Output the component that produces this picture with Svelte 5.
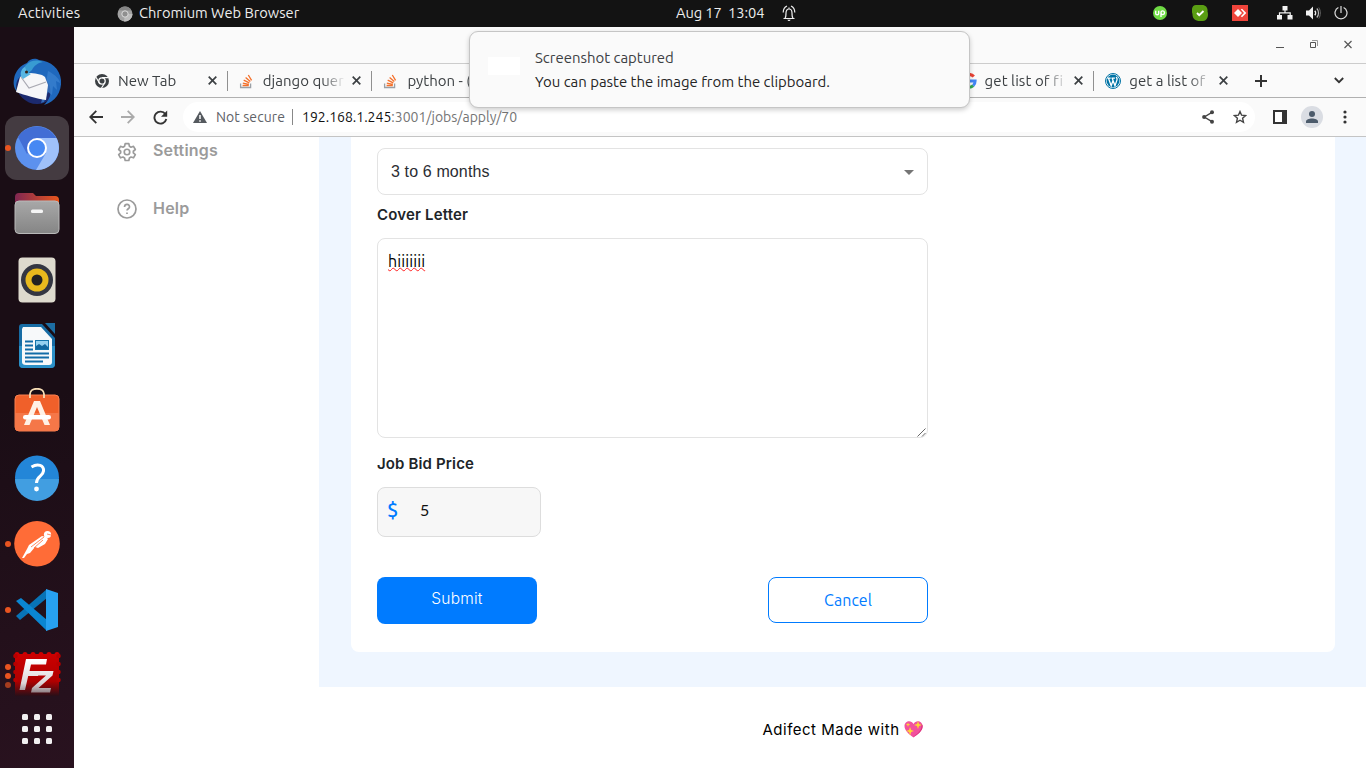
<script>
  const lead = [
    { title: 'New Tab', icon: 'chrome', ls: 0 },
    { title: 'django quer', icon: 'stack', ls: 0.03 },
    { title: 'python - (', icon: 'stack', ls: 0 }
  ];
  const tail = [
    { title: 'get list of fi', icon: 'google', ls: 0.08 },
    { title: 'get a list of', icon: 'wp', ls: 0.05 }
  ];
  const scallops = [0, 1, 2, 3, 4, 5];
  const nine = [0, 1, 2, 3, 4, 5, 6, 7, 8];
</script>

{#snippet favicon(name)}
  {#if name === 'chrome'}
    <svg width="16" height="16" viewBox="0 0 16 16"><circle cx="8" cy="8" r="7" fill="#3c4043" /><circle cx="8" cy="8" r="3.2" fill="#3c4043" stroke="#fafafa" stroke-width="1.3" /><path d="M8 4.7h6.5M5.2 9.8L2 4.3M10.8 9.7L7.5 15" stroke="#fafafa" stroke-width="1.2" /></svg>
  {:else if name === 'stack'}
    <svg width="16" height="16" viewBox="0 0 16 16" fill="none"><path d="M1.6 10.5v4h10v-4" stroke="#9aa0a6" stroke-width="1.3" /><path d="M3.6 12.500h6.200M3.800 10.100l6.100 1.200M4.700 7.200l5.600 2.700M6.600 4.400l4.700 4M9.300 2l3.300 5.300" stroke="#f4702a" stroke-width="1.3" /></svg>
  {:else if name === 'google'}
    <svg width="16" height="16" viewBox="0 0 16 16" fill="none" stroke-width="3"><path d="M12.8 3.6A6.2 6.2 0 0 0 2.5 5" stroke="#ea4335" /><path d="M2.5 5a6.2 6.2 0 0 0 0 6" stroke="#fbbc05" /><path d="M2.5 11a6.2 6.2 0 0 0 9.7 1.6" stroke="#34a853" /><path d="M8 8h6.1c0 2-.7 3.600-1.900 4.600" stroke="#4285f4" /></svg>
  {:else}
    <svg width="16" height="16" viewBox="0 0 16 16"><circle cx="8" cy="8" r="7.500" fill="#fff" stroke="#0073a5" /><circle cx="8" cy="8" r="6.400" fill="#0073a5" /><path d="M2.300 5.200h3.400M6.500 5.200h3.400M3.500 5.200l2.700 7.600L8.100 7.200M7.200 5.200l2.800 7.600 2-5.900c.5-1.500-.5-1.900-.7-3.100" fill="none" stroke="#fff" stroke-width="1.300" /></svg>
  {/if}
{/snippet}

{#snippet tab(t)}
  <div class="tab">
    {@render favicon(t.icon)}
    <span class="title" style="letter-spacing:{t.ls}px">{t.title}</span>
    <svg class="x" width="9" height="9" viewBox="0 0 9 9"><path d="M.7.7l7.600 7.600M8.300.7L.7 8.300" stroke="#3c4043" stroke-width="1.700" /></svg>
  </div>
{/snippet}

<div class="desktop">
  <header class="topbar">
    <div class="left">
      <span class="act">Activities</span>
      <svg width="16" height="16" viewBox="0 0 16 16"><circle cx="8" cy="8" r="7.500" fill="#a2a2a2" /><path d="M8 8h7.500A7.500 7.500 0 0 1 7 15.400z" fill="#bcbcbc" /><path d="M1.500 4.200A7.500 7.500 0 0 1 14.500 4.500H8z" fill="#858585" /><circle cx="8" cy="8" r="3.200" fill="#8f8f8f" stroke="#ddd" /></svg>
      <span class="appname">Chromium Web Browser</span>
    </div>
    <div class="clock">
      <span>Aug 17&nbsp; 13:04</span>
      <svg width="14" height="17" viewBox="0 0 14 17" fill="none" stroke="#eee"><path d="M1.500 13.500h11M3 13.200c1-1 1-2 1-5.200 0-2.600 1.100-4 3-4s3 1.400 3 4c0 3.200 0 4.200 1 5.200M7 4V2.500M1.200 7.500C1.300 4.300 2.600 2 5 1M12.800 7.500C12.700 4.300 11.400 2 9 1" stroke-width="1.200" /><path d="M5.200 14.700h3.600L7.600 16H6.400z" fill="#eee" stroke="none" /></svg>
    </div>
    <div class="tray">
      <svg width="14" height="14" viewBox="0 0 14 14"><circle cx="7" cy="7" r="7" fill="#6fda44" /><path d="M2.700 4.700v2.700c0 1.900 3 1.900 3 0V4.700M8 11V6.800c0-2.600 3.500-2.400 3.500 0 0 2.300-3 2.300-3.600.5" fill="none" stroke="#fff" stroke-width="1.400" /></svg>
      <svg class="skype" width="16" height="16" viewBox="0 0 16 16"><path d="M4 0h6c4 0 6 3 5.500 6.500C17 11 15 16 11 16H8C3 16 .3 13 .5 9 -1 5 0 0 4 0z" fill="#5a9e13" /><path d="M5 8l2.200 2.200L11.500 6" fill="none" stroke="#fff" stroke-width="1.900" /></svg>
      <svg class="anyd" width="16" height="16" viewBox="0 0 16 16"><path fill="#ef443b" d="M0 0h16v16H0z" /><path d="M2 8l4-4 4 4-4 4zM8.800 4.600L10 3.700 14.300 8 10 12.300l-1.200-1L12 8z" fill="#fff" /></svg>
      <svg class="net" width="16" height="14" viewBox="0 0 16 14" fill="#f2f2f2"><path d="M5.500 0h5v4.500h-5zM0 9h5v4.500H0zM10.500 9h5v4.500h-5z" /><path d="M8 4v3M2.500 10V6.900h10.700V10" fill="none" stroke="#f2f2f2" stroke-width="1.200" /></svg>
      <svg class="vol" width="15" height="14" viewBox="0 0 15 14"><path d="M0 4.500h3L7 .5v13l-4-4H0z" fill="#f2f2f2" /><path d="M8.800 4.700c1.100 1.200 1.100 3.400 0 4.600" fill="none" stroke="#f2f2f2" stroke-width="1.400" /><path d="M10.800 2.500c2.300 2.300 2.300 6.700 0 9" fill="none" stroke="#bbb" stroke-width="1.200" /><path d="M12.800 1.500c2 3 2 8 0 11" fill="none" stroke="#666" /></svg>
      <svg class="pow" width="14" height="14" viewBox="0 0 14 14" fill="none" stroke="#ddd" stroke-width="1.200"><path d="M7 0v7M4.400 1.500a6 6 0 1 0 5.200 0" /></svg>
    </div>
  </header>

  <div class="body">
    <nav class="dock">
      <div class="slot first">
        <svg width="50" height="50" viewBox="0 0 50 50"><circle cx="25" cy="26" r="21" fill="#1c2a6e" /><path d="M2 22C3 14 9 8 15 6c3-5 9-5 12-3 12 1 21 9 22 20 1 12-6 22-17 25 3-3 5-6 6-9 2-11-3-20-15-22L8 20c-4 3-5 10-2 16-4-4-5-9-4-14z" fill="#1f68bd" /><path d="M14 8c5-6 13-5 17-3-6 1-9 4-11 8l-8 7c-2-4-1-9 2-12z" fill="#389bd2" /><path d="M36 14c8 4 12 9 12 12l-4-2 1 9-4-4-1 9-4-3-4 10-3 1 4-14z" fill="#3b82d0" opacity=".75" /><path d="M4 35L8 20l8-4c6 0 14 1 17 4l3 8-2 15C25 42 13 38 4 35z" fill="#f6f6f8" /><path d="M9 20l8 11 17-6" fill="none" stroke="#a9a9b2" stroke-width="1.200" /><path d="M9 19c-1-4 1-8 4-9l2 5 4 2-8 5z" fill="#58b6e3" /><circle cx="14.500" cy="15" r="1.500" fill="#392418" /></svg>
      </div>
      <div class="slot active"><i class="run"></i>
        <svg width="44" height="44" viewBox="0 0 44 44"><circle cx="22" cy="22" r="22" fill="#5c91ee" /><path d="M3 11A22 22 0 0 1 41 12H22L12 28z" fill="#426ed5" /><path d="M22 12h19.500A22 22 0 0 1 21 44l10-17z" fill="#9fc1fa" /><circle cx="22" cy="22" r="9" fill="#4688f3" stroke="#fff" stroke-width="2" /></svg>
      </div>
      <div class="slot"><svg width="46" height="42" viewBox="0 0 46 42"><defs><linearGradient id="fold"><stop stop-color="#802752" /><stop offset="1" stop-color="#e9561d" /></linearGradient><linearGradient id="grey" x2="0" y2="1"><stop stop-color="#a8a8a8" /><stop offset="1" stop-color="#858585" /></linearGradient></defs><path d="M1 4q0-4 4-4h14l3 3h19q4 0 4 4v10H1z" fill="url(#fold)" /><rect x="1" y="8" width="44" height="32.500" rx="4" fill="url(#grey)" stroke="#b9b9b9" /><rect x="17" y="16.500" width="12" height="3.500" rx="1.500" fill="#f5f5f5" /></svg></div>
      <div class="slot"><svg width="38" height="46" viewBox="0 0 38 46"><rect x=".5" y=".5" width="37" height="45" rx="4" fill="#dedace" /><circle cx="19" cy="23" r="16" fill="#343642" /><circle cx="19" cy="23" r="11.500" fill="#e8b91d" /><circle cx="19" cy="23" r="5.500" fill="#222" /></svg></div>
      <div class="slot"><svg width="38" height="46" viewBox="0 0 38 46"><path d="M4 1h20l13 14v26q0 4-4 4H5q-4 0-4-4V4q0-3 3-3z" fill="#176ca4" /><path d="M1 23h36v18q0 4-4 4H5q-4 0-4-4z" fill="#2b90c7" /><path d="M5 4h18l11 12v23q0 3-3 3H8q-4 0-4-3V6z" fill="#f7f9fa" /><path d="M27 0h10v11z" fill="#1c6da2" /><path d="M7 18.500h8M7 22.500h8M7 26.500h8M7 30.500h24M7 34.500h24M7 38.500h18" stroke="#126ca7" stroke-width="1.800" /><rect x="17.500" y="17.500" width="13" height="9" fill="#95d0ef" stroke="#1474ab" /><path d="M18 26v-3l3-2 3 2 3-2 3 3v2z" fill="#12679f" /></svg></div>
      <div class="slot store"><svg width="46" height="44" viewBox="0 0 46 44"><rect x="1" y="7" width="44" height="36" rx="4" fill="#f0602a" stroke="#fa8051" /><path d="M1 25h44v14q0 4-4 4H5q-4 0-4-4z" fill="#f57748" /><path d="M16 10V6c0-7 14-7 14 0v4" fill="none" stroke="#f7ddb5" stroke-width="1.800" /><path d="M20 13h6l10 24h-5.500L23 19l-7.500 18H10z" fill="#fff1e6" /><rect x="9" y="27" width="28" height="4.500" rx="2.200" fill="#fff" /></svg></div>
      <div class="slot"><svg width="46" height="46" viewBox="0 0 46 46"><circle cx="23" cy="22.500" r="22" fill="#2386d8" /><path d="M1 24h44a22 22 0 0 1-44 0z" fill="#419ee1" /><path d="M17.500 12C24 8 30 10.500 29.500 16c-.5 5.500-7 5-7 12" fill="none" stroke="#fff" stroke-width="3" /><circle cx="22.500" cy="34" r="2.400" fill="#fff" /></svg></div>
      <div class="slot"><i class="run"></i><svg width="46" height="46" viewBox="0 0 46 46"><circle cx="23" cy="22.800" r="22.800" fill="#ff6c37" /><circle cx="33.500" cy="13.500" r="3.600" fill="#fff" /><path d="M28 15l4 1 2 2-3 5-7 4-3-1-5 6-3 1-3 4-2 0 5-9 2-4z" fill="#fff" /><path d="M17 26L30 16M20 27l9-8M33 13l4 1" stroke="#ff6c37" stroke-width=".8" /></svg></div>
      <div class="slot"><i class="run"></i><svg width="44" height="44" viewBox="0 0 44 44"><path d="M1 28l4 4L32 10V1z" fill="#0873b6" /><path d="M1 13l5-3 26 22v11z" fill="#0a86d2" /><path d="M31 1l12 4v34l-12 4z" fill="#27a1f1" /></svg></div>
      <div class="slot fz"><i class="run a"></i><i class="run b"></i><i class="run c"></i><svg width="48" height="44" viewBox="0 0 48 44"><defs><linearGradient id="fade" x2="0" y2="1"><stop stop-color="#c00" /><stop offset=".65" stop-color="#b00000" /><stop offset="1" stop-color="#270f18" /></linearGradient><linearGradient id="ink" gradientUnits="userSpaceOnUse" x1="0" y1="8" x2="0" y2="41"><stop stop-color="#fff" /><stop offset=".7" stop-color="#ddd6d8" /><stop offset="1" stop-color="#8d7d82" /></linearGradient></defs><path d="M2 2h44v42H2z" fill="url(#fade)" />{#each scallops as n}<circle cx={4 + n * 8} cy="2.500" r="2.500" fill="#c00" />{/each}{#each scallops.slice(0, 4) as n}<circle cx="2.500" cy={4 + n * 8} r="2.300" fill="#b80000" /><circle cx="45.500" cy={4 + n * 8} r="2.300" fill="#b80000" />{/each}<path d="M13 7h21l-1 5.500H18L16.500 19H26l-1 5h-9.800L12 38H6.500z" fill="url(#ink)" /><path d="M25 19h15.500l-1 4.500L25.500 36H38l-1 4.500H18l1-4.500 14-12.500h-9z" fill="url(#ink)" /></svg></div>
      <div class="apps">{#each nine as n}<i></i>{/each}</div>
    </nav>

    <section class="window">
      <div class="titlebar">
        <svg width="78" height="12" viewBox="0 0 78 12" fill="none" stroke="#555"><path d="M1 8.500h8M35.500 3.500h5v5h-5z" /><path d="M37 1.500h5.500V7" stroke="#999" /><path d="M69.500 2l7 7M76.500 2l-7 7" stroke-width="1.200" /></svg>
      </div>
      <div class="tabs">
        {#each lead as t}{@render tab(t)}{/each}
        <div class="covered"></div>
        {#each tail as t}{@render tab(t)}{/each}
        <svg class="plus" width="12" height="12" viewBox="0 0 12 12"><path d="M6 0v12M0 6h12" stroke="#333" stroke-width="2" /></svg>
        <svg class="chev" width="10" height="7" viewBox="0 0 10 7"><path d="M.8 1L5 5.200 9.200 1" fill="none" stroke="#333" stroke-width="1.800" /></svg>
      </div>
      <div class="toolbar">
        <svg class="back" width="14" height="14" viewBox="0 0 14 14" fill="none" stroke="#333" stroke-width="1.800"><path d="M14 7H1.500M7.300.8L1.200 7l6.100 6.200" /></svg>
        <svg class="fwd" width="14" height="14" viewBox="0 0 14 14" fill="none" stroke="#aaa" stroke-width="1.800"><path d="M0 7h12.500M6.700.8L12.800 7l-6.100 6.200" /></svg>
        <svg class="rel" width="15" height="15" viewBox="0 0 15 15"><path d="M12.400 4.200A6 6 0 1 0 13.300 9" fill="none" stroke="#333" stroke-width="1.900" /><path d="M14.200.5v6.300H8z" fill="#333" /></svg>
        <div class="omni">
          <svg class="warn" width="14" height="12" viewBox="0 0 14 12"><path d="M7 0l7 12H0z" fill="#555a5f" /><path d="M7 4v4M7 9.200v1.500" stroke="#fff" stroke-width="1.500" /></svg>
          <span class="ns">Not secure</span><span class="bar"></span>
          <span class="url"><b>192.168.1.245</b>:3001/jobs/apply/70</span>
          <svg class="share" width="12" height="14" viewBox="0 0 12 14"><path d="M10 2.300L2.300 7 10 11.700" fill="none" stroke="#444" stroke-width="1.400" /><g fill="#444"><circle cx="10" cy="2.300" r="2" /><circle cx="2.100" cy="7" r="2" /><circle cx="10" cy="11.700" r="2" /></g></svg>
          <svg class="star" width="14" height="14" viewBox="0 0 14 14"><path d="M7 1.500l1.600 3.700 4 .4-3 2.700.9 4L7 10.200l-3.500 2.100.9-4-3-2.700 4-.4z" fill="none" stroke="#444" stroke-width="1.400" /></svg>
        </div>
        <svg class="panel" width="14" height="14" viewBox="0 0 14 14"><path d="M1 1h12v12H1z" fill="#fff" stroke="#333" stroke-width="2" /><path d="M9 1h4v12H9z" fill="#333" /></svg>
        <svg class="user" width="22" height="22" viewBox="0 0 22 22"><circle cx="11" cy="11" r="11" fill="#dadde3" /><circle cx="11" cy="8" r="3" fill="#4c5b6b" /><path d="M5 17v-1.500c0-4 12-4 12 0V17z" fill="#4c5b6b" /></svg>
        <svg class="dots" width="4" height="14" viewBox="0 0 4 14" fill="#333"><circle cx="2" cy="2" r="1.600" /><circle cx="2" cy="7" r="1.600" /><circle cx="2" cy="12" r="1.600" /></svg>
      </div>

      <div class="page">
        <aside>
          <div class="item"><svg width="20" height="20" viewBox="0 0 24 24" fill="none" stroke="#9b9b9b" stroke-width="2" stroke-linejoin="round"><path d="M9.800 2h4.400l.7 3.100 1.900 1.100 3-1 2.200 3.800-2.400 2.100v2l2.400 2.100-2.200 3.800-3-1-1.900 1.100-.7 3.100H9.800l-.7-3.100L7.200 18l-3 1L2 15.200l2.400-2.100v-2L2 9l2.200-3.800 3 1 1.900-1.100z" /><circle cx="12" cy="12" r="3.300" /></svg><span>Settings</span></div>
          <div class="item help"><svg width="20" height="20" viewBox="0 0 20 20" fill="none" stroke="#9b9b9b" stroke-width="1.700"><circle cx="10" cy="10" r="9" /><path d="M7.500 8c.2-3.600 5.200-3.200 5 0 0 1.700-2.500 1.900-2.500 3.600M10 13.500v1.600" /></svg><span>Help</span></div>
        </aside>
        <div class="content">
          <main>
            <div class="card">
              <div class="select"><span>3 to 6 months</span><svg width="10" height="5" viewBox="0 0 10 5"><path d="M0 0h10L5 5z" fill="#757575" /></svg></div>
              <h4 class="cl">Cover Letter</h4>
              <div class="area">
                <span class="hi">hiiiiiii</span>
                <svg class="grip" width="9" height="9" viewBox="0 0 9 9"><path d="M.5 8.500l8-8M5 8.500L8.500 5" stroke="#555" stroke-width=".9" /></svg>
              </div>
              <h4 class="jb">Job Bid Price</h4>
              <div class="bid"><span class="usd">$</span><span class="five">5</span></div>
              <div class="btns"><button class="sub">Submit</button><button class="can">Cancel</button></div>
            </div>
          </main>
          <footer><span>Adifect Made with</span>
            <svg width="19" height="18" viewBox="0 0 19 18"><path d="M9.500 17.500C5 14.500.5 10.500.5 6 .5 1 7-.8 9.500 4 12-.8 18.500 1 18.500 6c0 4.500-4.500 8.500-9 11.500z" fill="#f2519d" /><path d="M17 4c2 6-4 10-8 13 5-2 11-7 9.500-12z" fill="#dd337f" /><path d="M14 1l1 3 3 1-3 1-1 3-1-3-3-1 3-1zM6 7l1.200 3L10 11l-2.800 1L6 15.500 5 12l-3-1 3-1zM4 2.500l.6 1.600 1.600.6-1.600.6L4 7l-.6-1.700-1.600-.6 1.600-.6z" fill="#fdd835" /></svg>
          </footer>
        </div>
      </div>
    </section>
  </div>

  <div class="toast"><div class="thumb"></div><div class="msg"><span class="m1">Screenshot captured</span><span class="m2">You can paste the image from the clipboard.</span></div></div>
</div>

<style>
  :global(body) { overflow: hidden; }
  .desktop { position: relative; width: 1366px; height: 768px; display: flex; flex-direction: column; overflow: hidden; background: #fff; font: 14px/20px Ubuntu, "Noto Sans", sans-serif; color: #3c4043; }
  .desktop * { box-sizing: border-box; }
  svg { display: block; flex: none; }
  span { white-space: nowrap; }
  .topbar { height: 27px; flex: none; background: #131313; color: #ededed; display: grid; grid-template-columns: 676px 200px 1fr; align-items: center; font-size: 14.670px; }
  .left, .clock, .tray { display: flex; align-items: center; }
  .left span, .clock span { margin-bottom: 1px; }
  .act { width: 117px; padding-left: 18px; letter-spacing: .22px; }
  .appname { margin-left: 6px; }
  .clock span { width: 106px; letter-spacing: -.1px; }
  .tray { padding-left: 277px; padding-bottom: 1px; }
  .skype { margin-left: 25px; } .anyd { margin-left: 24px; } .net { margin-left: 29px; } .vol { margin-left: 13px; } .pow { margin-left: 13px; }
  .body { flex: 1; display: flex; min-height: 0; }
  .dock { width: 74px; flex: none; background: linear-gradient(165deg, #1a0d15 50%, #29121f); display: flex; flex-direction: column; align-items: center; padding-top: 23px; }
  .slot { width: 64px; height: 64px; margin-bottom: 2px; display: flex; align-items: center; justify-content: center; position: relative; flex: none; }
  .slot.store { padding-bottom: 5px; }
  .slot.fz { padding-bottom: 4px; }
  .active { background: #443b41; border-radius: 12px; }
  .run { position: absolute; width: 6px; height: 6px; border-radius: 3px; background: #e95420; left: 0; top: 29px; }
  .run.a { top: 20px; } .run.b { top: 29px; } .run.c { top: 38px; opacity: .65; }
  .apps { display: grid; grid-template-columns: repeat(3, 6px); gap: 6px; margin-top: 4px; }
  .apps i { width: 6px; height: 6px; background: #f2f0f1; border-radius: 1.500px; }
  .window { flex: 1; display: flex; flex-direction: column; min-width: 0; }
  .titlebar { height: 37px; flex: none; background: #fafafa; border-bottom: 1px solid #ccc; display: flex; justify-content: flex-end; align-items: center; padding-right: 13px; }
  .tabs { height: 34px; flex: none; background: #fafafa; border-bottom: 1px solid #b0b0b0; display: flex; align-items: center; padding-left: 9px; }
  .tab { width: 144.700px; flex: none; height: 20px; border-right: 1px solid #909090; display: flex; align-items: center; padding: 0 10px 0 11px; }
  .title { width: 86px; margin: 0 5px 0 8px; font-size: 15px; -webkit-mask-image: linear-gradient(90deg, #000 70%, transparent 98%); mask-image: linear-gradient(90deg, #000 70%, transparent 98%); }
  .covered { width: 432.500px; flex: none; }
  .tabs .tab:last-of-type { border-color: transparent; }
  .plus { margin-left: 16px; } .chev { margin-left: 67px; }
  .toolbar { height: 39px; flex: none; background: #fafafa; border-bottom: 1px solid #c4c4c4; display: flex; align-items: center; padding-left: 15px; }
  .fwd { margin-left: 18px; } .rel { margin-left: 18px; }
  .omni { width: 1072px; height: 30px; margin-left: 15px; border-radius: 15px; background: #fff; display: flex; align-items: center; padding-left: 10px; }
  .ns { width: 75px; margin-left: 9px; color: #5f6368; letter-spacing: .08px; }
  .bar { width: 1px; height: 16px; background: #888; margin-left: 1px; }
  .url { margin-left: 9px; color: #757575; }
  .url b { font-weight: 400; color: #111; }
  .share { margin-left: auto; } .star { margin: 0 8px 0 19px; }
  .panel { margin-left: 18px; } .user { margin-left: 14px; } .dots { margin-left: 20px; }
  .page { flex: 1; display: flex; min-height: 0; background: #fff; }
  aside { width: 245px; flex: none; padding: 2px 0 0 43px; font: 600 16px/22px Gilroy, Inter, sans-serif; color: #9b9b9b; }
  .item { display: flex; gap: 16px; height: 22px; }
  .item svg { margin-top: 3px; }
  .item span { letter-spacing: .2px; }
  .help { margin-top: 36px; }
  .help svg { margin-top: 2px; }
  .content { flex: 1; display: flex; flex-direction: column; }
  main { height: 550px; flex: none; background: #eff6ff; padding: 0 31px 35px 32px; }
  .card { height: 515px; background: #fff; border-radius: 0 0 8px 8px; padding: 11px 26px 0; }
  .select { width: 551px; height: 47px; border: 1px solid #e3e3e3; border-radius: 8px; display: flex; align-items: center; justify-content: space-between; padding: 0 13px; font: 16px/24px "Liberation Sans", sans-serif; color: #2b2d33; letter-spacing: .13px; }
  .select svg { margin-top: 1px; }
  h4 { margin: 0; font: 600 15px/20px Gilroy, Inter, sans-serif; color: #202428; }
  .cl { margin-top: 10px; letter-spacing: .17px; }
  .area { position: relative; width: 551px; height: 200px; margin-top: 13px; border: 1px solid #e3e3e3; border-radius: 8px; padding: 11px 10px; color: #000; }
  .hi { display: inline-block; font-size: 16px; line-height: 22px; letter-spacing: .1px; text-decoration: underline wavy #f22 1px; text-underline-offset: 0; text-decoration-skip-ink: none; }
  .grip { position: absolute; right: 1px; bottom: 0; }
  .jb { margin-top: 16px; letter-spacing: .14px; }
  .bid { width: 164px; height: 50px; margin-top: 13px; border: 1px solid #ddd; border-radius: 8px; background: #f7f7f7; display: flex; align-items: center; padding: 0 0 4px 9px; color: #111; }
  .usd { width: 33px; color: #007bff; font-size: 20px; font-weight: 500; }
  .five { font: 16px/20px Gilroy, Lato, sans-serif; }
  .btns { width: 551px; margin-top: 40px; display: flex; justify-content: space-between; align-items: flex-start; }
  button { width: 160px; border-radius: 8px; padding: 0; }
  .sub { height: 47px; background: #007bff; border: 0; color: #fff; font: 300 15.500px/20px Gilroy, Inter, sans-serif; letter-spacing: .22px; padding-bottom: 3px; }
  .can { height: 46px; background: #fff; border: 1px solid #007bff; color: #007bff; font: 16px/20px Ubuntu, "Noto Sans", sans-serif; letter-spacing: .05px; }
  footer { flex: 1; display: flex; justify-content: center; padding-top: 33px; gap: 4px; font: 400 15px/20px Gilroy, Inter, sans-serif; letter-spacing: .5px; color: #000; }
  .toast { position: absolute; left: 469px; top: 31px; width: 501px; height: 77px; background: #fafafa; border: 1px solid #c5c5c5; border-radius: 9px; box-shadow: 0 2px 5px #0003; display: flex; align-items: center; padding-left: 18px; font-size: 14.950px; }
  .thumb { width: 32px; height: 18px; background: #fff; margin-top: -8px; }
  .msg { margin-left: 15px; display: flex; flex-direction: column; gap: 4px; }
  .m2 { color: #252525; }
</style>
